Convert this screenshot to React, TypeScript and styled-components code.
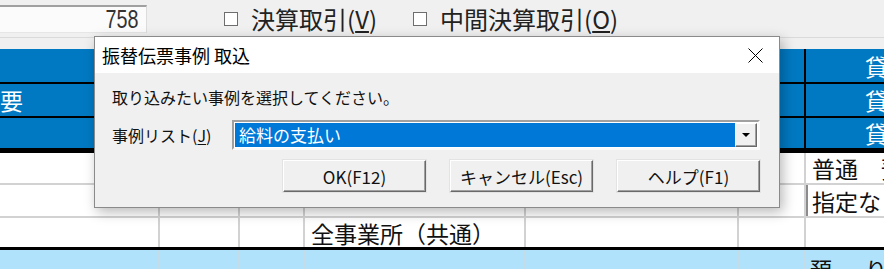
import React from "react";
import styled, { createGlobalStyle } from "styled-components";

const GlobalStyle = createGlobalStyle`
  html, body {
    margin: 0;
    padding: 0;
    background: #f0f0f0;
  }
`;

const FONT = `"Noto Sans CJK JP", "Liberation Sans", sans-serif`;

const Screen = styled.div`
  position: relative;
  width: 884px;
  height: 269px;
  overflow: hidden;
  background: #f0f0f0;
  color: #000;
  font-family: ${FONT};
`;

/* ---- top toolbar ---- */

const Toolbar = styled.div`
  height: 38px;
  box-sizing: border-box;
  display: flex;
  align-items: center;
  border-bottom: 1px solid #dadada;
`;

const NumberBox = styled.div`
  width: 147px;
  height: 28px;
  box-sizing: border-box;
  background: #fbfbfb;
  border-top: 2px solid #a0a0a0;
  border-right: 1px solid #dcdcdc;
  border-bottom: 1px solid #e6e6e6;
  display: flex;
  align-items: center;
  justify-content: flex-end;
  padding-right: 8px;
  overflow: hidden;
`;

const NumberText = styled.span`
  display: inline-block;
  font-family: "Liberation Sans", sans-serif;
  font-size: 26px;
  line-height: 26px;
  color: #333;
  transform: scaleX(0.76);
  transform-origin: right center;
`;

const CheckLabel = styled.label<{ $gap: number }>`
  display: flex;
  align-items: center;
  margin-left: ${(p) => p.$gap}px;
  font-size: 24px;
  line-height: 28px;
  color: #222;
`;

const CheckBox = styled.span`
  width: 14px;
  height: 14px;
  box-sizing: border-box;
  border: 1px solid #6e6e6e;
  background: #fff;
  margin-right: 13px;
`;

const U = styled.span`
  text-decoration: underline;
  text-underline-offset: 2px;
`;

const Spacer = styled.div`
  height: 11px;
`;

/* ---- sheet grid ---- */

const COLS = "158px 78px 63px 219px 211px 65px 200px";

const Band = styled.div<{ $line: string; $rows: string; $bottom?: string }>`
  display: grid;
  grid-template-columns: ${COLS};
  grid-template-rows: ${(p) => p.$rows};
  gap: 2px;
  background: ${(p) => p.$line};
  border-bottom: ${(p) => p.$bottom ?? "none"};
`;

const HeadCell = styled.div<{ $pad?: number }>`
  background: #0079c2;
  color: #fff;
  font-size: 23px;
  display: flex;
  align-items: center;
  padding-left: ${(p) => p.$pad ?? 0}px;
  white-space: nowrap;
  overflow: hidden;
`;

const BodyCell = styled.div`
  background: #fff;
  font-size: 23px;
  display: flex;
  align-items: center;
  padding-left: 6px;
  white-space: nowrap;
  overflow: hidden;
  color: #111;
`;

const TotalCell = styled.div`
  background: #b0e3fb;
  font-size: 22px;
  padding: 5px 0 0 4px;
  white-space: nowrap;
  overflow: hidden;
  color: #111;
  line-height: 26px;
`;

const InsetField = styled.div`
  flex: 1;
  align-self: stretch;
  margin-left: -6px;
  margin-top: -1px;
  box-sizing: border-box;
  border-top: 1px solid #b4b4b4;
  border-left: 2px solid #8c8c8c;
  background: #fff;
  display: flex;
  align-items: center;
  padding-left: 4px;
`;

/* ---- dialog ---- */

const Dialog = styled.div`
  position: absolute;
  left: 94px;
  top: 36px;
  width: 686px;
  height: 172px;
  box-sizing: border-box;
  border: 1px solid #8a8a8a;
  background: #f0f0f0;
  box-shadow: 3px 4px 12px rgba(0, 0, 0, 0.28);
  display: flex;
  flex-direction: column;
`;

const TitleBar = styled.div`
  height: 36px;
  flex: none;
  background: #fff;
  display: flex;
  align-items: center;
  justify-content: space-between;
  padding: 0 16px 0 7px;
  font-size: 18px;
  line-height: 22px;
`;

const DialogBody = styled.div`
  padding: 14px 19px 0 17px;
  display: flex;
  flex-direction: column;
`;

const Message = styled.div`
  font-size: 16px;
  line-height: 20px;
  color: #111;
`;

const FieldRow = styled.div`
  display: flex;
  align-items: center;
  margin-top: 13px;
  height: 30px;
`;

const FieldLabel = styled.div`
  width: 120px;
  flex: none;
  font-size: 16px;
  line-height: 20px;
  color: #111;
`;

const Combo = styled.div`
  flex: 1;
  height: 30px;
  box-sizing: border-box;
  display: flex;
  border-top: 2px solid #a0a0a0;
  border-left: 2px solid #a0a0a0;
  border-right: 2px solid #fafafa;
  border-bottom: 2px solid #fafafa;
  background: #fff;
  padding: 1px;
`;

const ComboValue = styled.div`
  flex: 1;
  background: #0078d7;
  color: #fff;
  font-size: 17px;
  line-height: 24px;
  padding-left: 4px;
`;

const DropButton = styled.div`
  width: 22px;
  box-sizing: border-box;
  background: #f0f0f0;
  border-top: 1px solid #fff;
  border-left: 1px solid #fff;
  border-right: 1px solid #696969;
  border-bottom: 1px solid #696969;
  box-shadow: inset -1px -1px 0 #a0a0a0;
  display: flex;
  align-items: center;
  justify-content: center;
`;

const ButtonRow = styled.div`
  display: flex;
  justify-content: flex-end;
  gap: 24px;
  margin-top: 10px;
`;

const Button = styled.button`
  width: 143px;
  height: 32px;
  box-sizing: border-box;
  background: #f0f0f0;
  border-top: 1px solid #fff;
  border-left: 1px solid #fff;
  border-right: 1px solid #696969;
  border-bottom: 1px solid #696969;
  box-shadow: inset -1px -1px 0 #a0a0a0, 0 0 0 1px #e3e3e3;
  font-family: ${FONT};
  font-size: 17px;
  color: #111;
  padding: 0;
`;

export default function App() {
  return (
    <>
      <GlobalStyle />
      <Screen>
        <Toolbar>
          <NumberBox>
            <NumberText>758</NumberText>
          </NumberBox>
          <CheckLabel $gap={77}>
            <CheckBox />
            決算取引(<U>V</U>)
          </CheckLabel>
          <CheckLabel $gap={36}>
            <CheckBox />
            中間決算取引(<U>O</U>)
          </CheckLabel>
        </Toolbar>
        <Spacer />

        <Band $line="#000" $rows="33px 32px 30px" $bottom="5px solid #000">
          <HeadCell />
          <HeadCell />
          <HeadCell />
          <HeadCell />
          <HeadCell />
          <HeadCell />
          <HeadCell $pad={59}>貸方科目</HeadCell>

          <HeadCell $pad={0}>要</HeadCell>
          <HeadCell />
          <HeadCell />
          <HeadCell />
          <HeadCell />
          <HeadCell />
          <HeadCell $pad={59}>貸方補助</HeadCell>

          <HeadCell />
          <HeadCell />
          <HeadCell />
          <HeadCell />
          <HeadCell />
          <HeadCell />
          <HeadCell $pad={59}>貸方部門</HeadCell>
        </Band>

        <Band $line="#d2d2d2" $rows="30px 31px 29px" $bottom="3px solid #000">
          <BodyCell />
          <BodyCell />
          <BodyCell />
          <BodyCell />
          <BodyCell />
          <BodyCell />
          <BodyCell>普通　預金</BodyCell>

          <BodyCell />
          <BodyCell />
          <BodyCell />
          <BodyCell />
          <BodyCell />
          <BodyCell />
          <BodyCell>
            <InsetField>指定なし</InsetField>
          </BodyCell>

          <BodyCell />
          <BodyCell />
          <BodyCell />
          <BodyCell>全事業所（共通）</BodyCell>
          <BodyCell />
          <BodyCell />
          <BodyCell />
        </Band>

        <Band $line="#c4dbe8" $rows="30px">
          <TotalCell />
          <TotalCell />
          <TotalCell />
          <TotalCell />
          <TotalCell />
          <TotalCell />
          <TotalCell>{"預\u3000\u2002り"}</TotalCell>
        </Band>

        <Dialog>
          <TitleBar>
            <span>振替伝票事例 取込</span>
            <svg width="15" height="15" viewBox="0 0 15 15">
              <path d="M0.5 0.5 L14.5 14.5 M14.5 0.5 L0.5 14.5" stroke="#000" strokeWidth="1" />
            </svg>
          </TitleBar>
          <DialogBody>
            <Message>取り込みたい事例を選択してください。</Message>
            <FieldRow>
              <FieldLabel>
                事例リスト(<U>J</U>)
              </FieldLabel>
              <Combo>
                <ComboValue>給料の支払い</ComboValue>
                <DropButton>
                  <svg width="8" height="4" viewBox="0 0 8 4">
                    <path d="M0 0 H8 L4 4 Z" fill="#000" />
                  </svg>
                </DropButton>
              </Combo>
            </FieldRow>
            <ButtonRow>
              <Button>OK(F12)</Button>
              <Button>キャンセル(Esc)</Button>
              <Button>ヘルプ(F1)</Button>
            </ButtonRow>
          </DialogBody>
        </Dialog>
      </Screen>
    </>
  );
}
